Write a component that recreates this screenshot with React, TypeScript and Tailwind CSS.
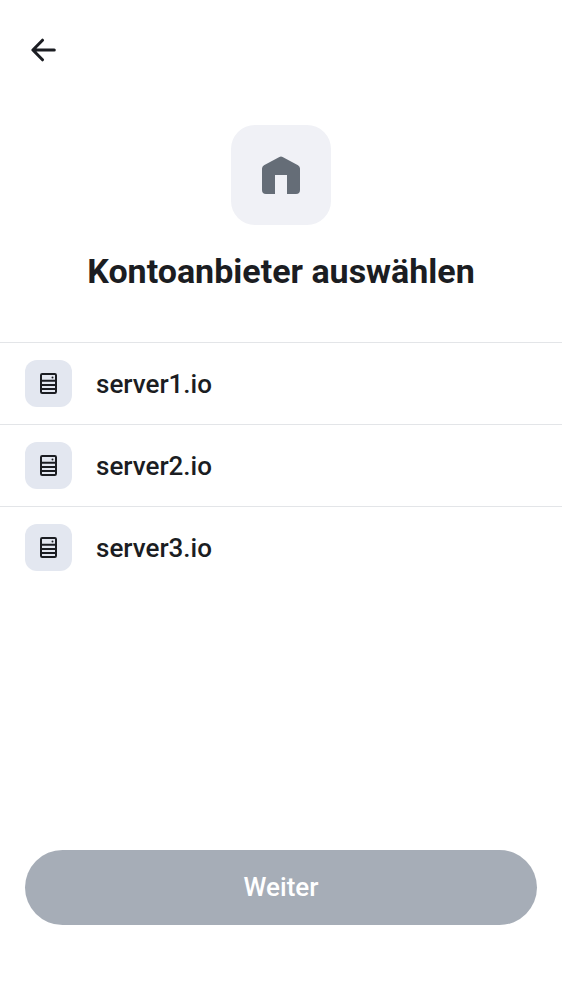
import { useState } from "react";

const providers = ["server1.io", "server2.io", "server3.io"];

function BackIcon() {
  return (
    <svg width="26" height="26" viewBox="0 0 26 26" fill="none" stroke="currentColor" strokeWidth="3" aria-hidden="true">
      <path d="M23.300 13H2.500M11.500 3.200 1.900 13l9.600 9.800" strokeLinecap="round" strokeLinejoin="round" />
    </svg>
  );
}

function HomeIcon() {
  return (
    <svg width="38" height="38" viewBox="0 0 38 38" fill="#656d77" aria-hidden="true">
      <path d="M17.4.9a3.2 3.2 0 0 1 3.2 0L36 9.300Q38 10.400 38 12.600V34a4 4 0 0 1-4 4H25V19H13V38H4a4 4 0 0 1-4-4V12.600Q0 10.400 2 9.300Z" />
    </svg>
  );
}

function ServerIcon() {
  return (
    <svg width="17" height="21" viewBox="0 0 17 21" fill="none" stroke="currentColor" strokeWidth="2" aria-hidden="true">
      <rect x="1" y="1" width="15" height="19" rx="1.2" />
      <path d="M1 7.800h15M1 11.900h15M1 16h15" />
      <circle cx="12.500" cy="4.500" r="1" fill="currentColor" stroke="none" />
    </svg>
  );
}

export default function App() {
  const [selected, setSelected] = useState<string | null>(null);

  return (
    <main className="flex min-h-screen flex-col bg-white font-[Roboto,sans-serif] text-[#1b1d22]">
      <header className="flex h-25 items-center px-6">
        <button type="button" aria-label="Zurück" className="flex size-10 items-center justify-center">
          <BackIcon />
        </button>
      </header>

      <section className="flex flex-col items-center px-6 pt-[25px] pb-12">
        <div className="flex size-25 items-center justify-center rounded-3xl bg-[#f0f1f6]">
          <HomeIcon />
        </div>
        <h1 className="mt-6 text-center text-[34px] leading-[45px] font-bold">Kontoanbieter auswählen</h1>
      </section>

      <ul className="flex flex-col">
        {providers.map((name) => (
          <li key={name} className="border-t border-[#e3e5e8]">
            <button
              type="button"
              aria-pressed={selected === name}
              onClick={() => setSelected(name)}
              className="flex w-full items-center gap-6 px-[25px] pt-[17px] pb-[17px] text-left"
            >
              <span className="flex size-[47px] items-center justify-center rounded-xl bg-[#e3e7f0]">
                <ServerIcon />
              </span>
              <span className="text-[26px] leading-9 font-medium">{name}</span>
            </button>
          </li>
        ))}
      </ul>

      <footer className="mt-auto px-[25px] pb-[75px]">
        <button type="button" className="h-[75px] w-full rounded-full bg-[#a6adb7] text-[26px] font-medium text-white">
          Weiter
        </button>
      </footer>
    </main>
  );
}
